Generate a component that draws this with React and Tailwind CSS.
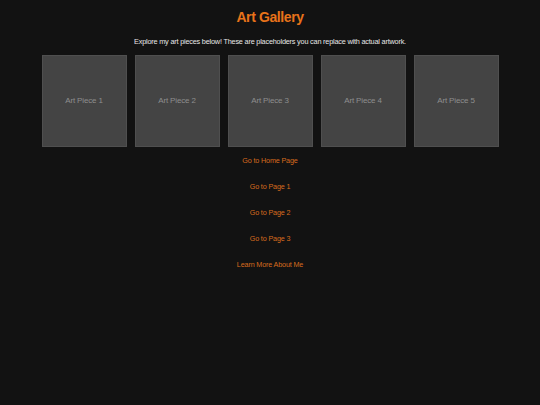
export default function App() {
  const pieces = [1, 2, 3, 4, 5];
  const links = [
    "Go to Home Page",
    "Go to Page 1",
    "Go to Page 2",
    "Go to Page 3",
    "Learn More About Me",
  ];
  return (
    <div
      className="min-h-[405px] w-full bg-[#121212] text-[#e0e0e0] flex flex-col items-center"
      style={{ fontFamily: '"Liberation Sans", Arial, sans-serif' }}
    >
      <h1 className="mt-[9px] text-[14px] leading-[17px] font-bold tracking-[-0.4px] text-[#e8731a]">
        Art Gallery
      </h1>
      <p className="mt-[11px] text-[7.3px] leading-[9px] tracking-[-0.2px] text-[#e6e6e6]">
        Explore my art pieces below! These are placeholders you can replace with actual artwork.
      </p>
      <div className="mt-[9px] flex gap-[8px]">
        {pieces.map((n) => (
          <div
            key={n}
            className="w-[85px] h-[92px] bg-[#444444] border border-[#4f4f4f] flex items-center justify-center text-[8px] tracking-[-0.15px] text-[#8e8e8e]"
          >
            Art Piece {n}
          </div>
        ))}
      </div>
      <nav className="mt-[9px] flex flex-col items-center gap-[17px]">
        {links.map((l) => (
          <a key={l} href="#" className="text-[7.2px] leading-[9px] tracking-[-0.15px] text-[#d86b1e]">
            {l}
          </a>
        ))}
      </nav>
    </div>
  );
}
